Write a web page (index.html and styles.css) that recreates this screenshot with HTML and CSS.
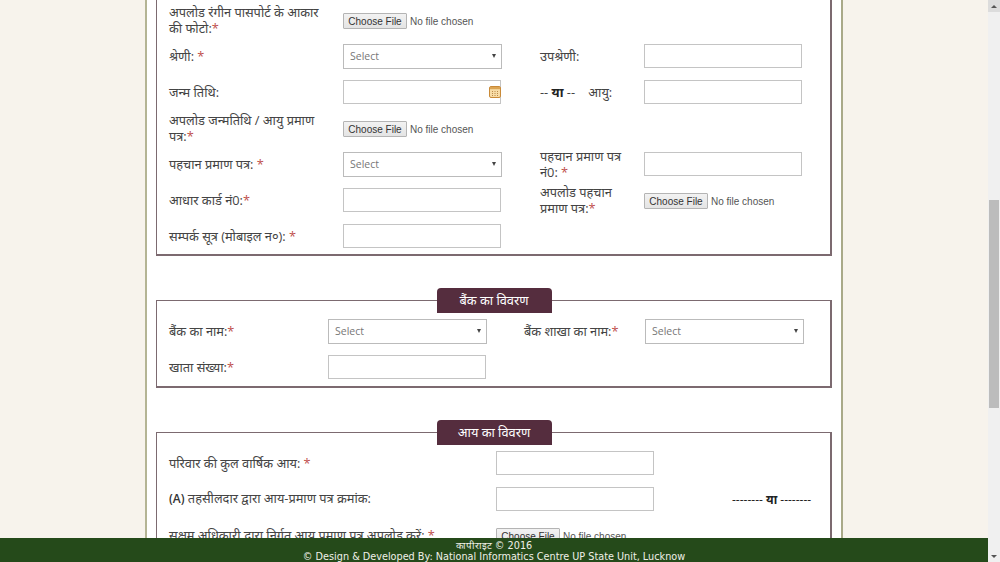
FILE: index.html
```html
<!DOCTYPE html>
<html lang="hi">
<head>
<meta charset="utf-8">
<title>आवेदन पत्र</title>
<link rel="stylesheet" href="styles.css">
</head>
<body>
<div class="window">
  <div class="viewport">
    <div class="page">
      <main class="sheet">
        <section class="panel panel-personal">
          <div class="grid grid-personal">
            <label class="lbl">अपलोड रंगीन पासपोर्ट के आकार<br>की फोटो:<span class="req">*</span></label>
            <div class="file-cell span-rest"><input type="file" class="file"></div>

            <label class="lbl">श्रेणी: <span class="req">*</span></label>
            <div class="sel-wrap"><select class="sel"><option>Select</option></select></div>
            <label class="lbl second">उपश्रेणी:</label>
            <input type="text" class="txt">

            <label class="lbl">जन्म तिथि:</label>
            <div class="date-wrap">
              <input type="text" class="txt">
              <svg class="cal" viewBox="0 0 12 12" width="12" height="12" aria-hidden="true">
                <rect x="0.5" y="0.5" width="11" height="11" rx="1.5" fill="#f8dca6" stroke="#c98a38"/>
                <rect x="1" y="1" width="10" height="2.2" fill="#dca452"/>
                <path d="M3 5.5h1M5.5 5.5h1M8 5.5h1M3 7.5h1M5.5 7.5h1M8 7.5h1M3 9.5h1M5.5 9.5h1M8 9.5h1" stroke="#b98a49" stroke-width="1"/>
              </svg>
            </div>
            <label class="lbl second">-- <b>या</b> -- <span class="age">आयु:</span></label>
            <input type="text" class="txt">

            <label class="lbl">अपलोड जन्मतिथि / आयु प्रमाण<br>पत्र:<span class="req">*</span></label>
            <div class="file-cell span-rest"><input type="file" class="file"></div>

            <label class="lbl">पहचान प्रमाण पत्र: <span class="req">*</span></label>
            <div class="sel-wrap"><select class="sel"><option>Select</option></select></div>
            <label class="lbl second">पहचान प्रमाण पत्र<br>नं0: <span class="req">*</span></label>
            <input type="text" class="txt">

            <label class="lbl">आधार कार्ड नं0:<span class="req">*</span></label>
            <input type="text" class="txt">
            <label class="lbl second">अपलोड पहचान<br>प्रमाण पत्र:<span class="req">*</span></label>
            <div class="file-cell"><input type="file" class="file"></div>

            <label class="lbl">सम्पर्क सूत्र (मोबाइल न०): <span class="req">*</span></label>
            <input type="text" class="txt">
          </div>
        </section>

        <fieldset class="panel panel-bank">
          <legend class="tag">बैंक का विवरण</legend>
          <div class="grid grid-bank">
            <label class="lbl">बैंक का नाम:<span class="req">*</span></label>
            <div class="sel-wrap"><select class="sel"><option>Select</option></select></div>
            <label class="lbl second">बैंक शाखा का नाम:<span class="req">*</span></label>
            <div class="sel-wrap"><select class="sel"><option>Select</option></select></div>

            <label class="lbl">खाता संख्या:<span class="req">*</span></label>
            <input type="text" class="txt">
          </div>
        </fieldset>

        <fieldset class="panel panel-income">
          <legend class="tag">आय का विवरण</legend>
          <div class="grid grid-income">
            <label class="lbl">परिवार की कुल वार्षिक आय: <span class="req">*</span></label>
            <input type="text" class="txt">

            <label class="lbl"><span class="latin">(A)</span> तहसीलदार द्वारा आय-प्रमाण पत्र क्रमांक:</label>
            <input type="text" class="txt">
            <span class="or">-------- <b>या</b> --------</span>

            <label class="lbl">सक्षम अधिकारी द्वारा निर्गत आय प्रमाण पत्र अपलोड करें: <span class="req">*</span></label>
            <div class="file-cell"><input type="file" class="file"></div>
          </div>
        </fieldset>
      </main>
    </div>
    <footer class="footer">
      <div>कापीराइट © 2016</div>
      <div>© Design &amp; Developed By: National Informatics Centre UP State Unit, Lucknow</div>
    </footer>
  </div>
  <div class="scrollbar" aria-hidden="true">
    <div class="sb-btn"><span class="arrow-up"></span></div>
    <div class="sb-track"><div class="sb-thumb"></div></div>
    <div class="sb-btn sb-btn-down"><span class="arrow-down"></span></div>
  </div>
</div>
</body>
</html>
```
FILE: styles.css
```css
* { box-sizing: border-box; }
html, body { margin: 0; height: 100%; overflow: hidden; }
body {
  font-family: "Open Sans", "Noto Sans", "Liberation Sans", sans-serif;
  font-size: 13px;
  color: #444;
  background: #f7f3ec;
}
.window { display: flex; width: 1000px; height: 562px; }
.viewport { width: 988px; display: flex; flex-direction: column; }
.page { height: 538px; overflow: hidden; display: flex; justify-content: center; }
.sheet {
  width: 698px;
  height: 600px;
  flex: none;
  background: #fff;
  border-left: 2px solid #b4b494;
  border-right: 2px solid #a9a988;
  padding: 0 9px;
}
.panel {
  margin: 0;
  padding: 0 11px 0 12px;
  min-width: 0;
  border: solid #7c6a70;
  border-width: 1px 2px 2px 1px;
}
.panel-personal { border-top: 0; padding-top: 2px; }
.panel-bank { margin-top: 32px; padding-bottom: 1px; }
.panel-income { margin-top: 32px; }
.tag {
  display: block;
  margin: 0 auto;
  padding: 0;
  width: 115px;
  height: 25px;
  line-height: 24px;
  text-align: center;
  color: #fff;
  font-size: 12.8px;
  background: #552d3e;
  border-radius: 4px 4px 0 0;
}
.grid { display: grid; grid-auto-rows: 36px; align-items: center; }
.grid-personal { grid-template-columns: 174px 158px 39px 104px 158px; }
.grid-bank { grid-template-columns: 159px 158px 38px 121px 158px; }
.grid-income { grid-template-columns: 327px 158px 78px 78px; }
.grid > .lbl { grid-column: 1; }
.grid > .lbl.second { grid-column: 4; }
.span-rest { grid-column: 2 / -1; }
.or { grid-column: 4; }
.lbl { display: block; line-height: 16px; white-space: nowrap; font-size: 12.8px; margin-top: -1px; }
.req { color: #c0504d; }
.age { margin-left: 10px; }
.latin { font-size: 12px; font-weight: 600; color: #333; }
.lbl b, .or b { color: #222; }
.or { font-size: 12px; color: #222; white-space: nowrap; text-align: center; }
.txt, .sel {
  display: block;
  width: 158px;
  height: 24px;
  margin: 0;
  background: #fff;
  border: 1px solid #c4c4c4;
  border-radius: 0;
  outline: none;
}
.sel-wrap { position: relative; width: 159px; }
.sel-wrap::after {
  content: "";
  position: absolute;
  right: 6px;
  top: 10px;
  border-left: 2.5px solid transparent;
  border-right: 2.5px solid transparent;
  border-top: 4px solid #444;
}
.sel {
  appearance: none;
  width: 159px;
  height: 25px;
  padding: 0 0 0 6px;
  border-color: #bbb;
  font-family: "Open Sans", sans-serif;
  font-size: 10.5px;
  color: #777;
}
.date-wrap { position: relative; width: 158px; }
.cal { position: absolute; right: 0; top: 6px; }
.file {
  font-family: "Liberation Sans", Arial, sans-serif;
  font-size: 10px;
  color: #555;
  width: 158px;
}
.file::file-selector-button {
  font: inherit;
  color: #333;
  width: 64px;
  height: 16px;
  padding: 0;
  margin: 0 3px 0 0;
  background: linear-gradient(#f2f2f2, #e4e4e4);
  border: 1px solid #b4b4b4;
  border-radius: 1px;
}
.file-cell { display: flex; align-items: center; margin-top: 2px; }
.footer {
  height: 24px;
  flex: none;
  background: #254a1a;
  color: #f0f0e8;
  font-family: "DejaVu Sans", Verdana, sans-serif;
  font-size: 9.7px;
  line-height: 11px;
  text-align: center;
  padding-top: 2px;
}
.scrollbar { width: 12px; flex: none; display: flex; flex-direction: column; background: #f0f0f0; }
.sb-btn { height: 12px; flex: none; background: #dcdcdc; display: flex; justify-content: center; align-items: center; }
.sb-btn-down { background: #f0f0f0; }
.sb-track { flex: 1; padding-top: 188px; }
.sb-thumb { width: 10px; margin-left: 1px; height: 208px; background: #bcbcbc; }
.arrow-up, .arrow-down { width: 0; height: 0; border-left: 3px solid transparent; border-right: 3px solid transparent; }
.arrow-up { border-bottom: 3px solid #555; }
.arrow-down { border-top: 3px solid #555; }
```
